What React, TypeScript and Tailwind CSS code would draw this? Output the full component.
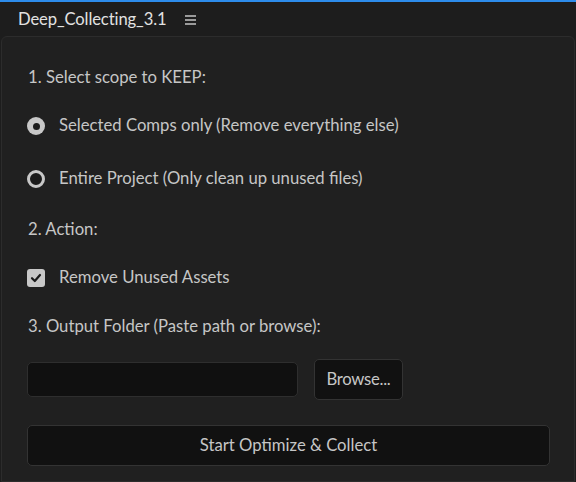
import React from "react";

export default function App() {
  const font = { fontFamily: "Lato, 'Open Sans', sans-serif" };
  return (
    <div className="w-[576px] h-[482px] bg-[#1d1d1d] overflow-hidden flex flex-col" style={font}>
      <div className="h-[2px] bg-[#2d8ceb]" />
      <div className="h-[34px] flex items-center pl-[18px] gap-[18px]">
        <span className="text-[16.6px] text-[#e2e2e2] tracking-[-0.1px]">Deep_Collecting_3.1</span>
        <div className="flex flex-col gap-[2px] mt-[1px]">
          <div className="w-[11px] h-[2px] bg-[#9a9a9a]" />
          <div className="w-[11px] h-[2px] bg-[#9a9a9a]" />
          <div className="w-[11px] h-[2px] bg-[#9a9a9a]" />
        </div>
      </div>
      <div className="flex-1 ml-[1px] mr-[1px] border border-[#2c2c2c] rounded-t-[6px] bg-[#202020] pl-[25px] pr-[26px] pt-[28px] text-[#c6c6c6] text-[16.7px]">
        <div className="h-[26px] flex items-center pl-[1px]">1. Select scope to KEEP:</div>
        <div className="h-[24px] mt-[23px] flex items-center gap-[14px]">
          <div className="w-[18px] h-[18px] rounded-full bg-[#c8c8c8] flex items-center justify-center">
            <div className="w-[7px] h-[7px] rounded-full bg-[#1b1b1b]" />
          </div>
          <span>Selected Comps only (Remove everything else)</span>
        </div>
        <div className="h-[24px] mt-[29px] flex items-center gap-[14px]">
          <div className="w-[18px] h-[18px] rounded-full border-[3px] border-[#c8c8c8] bg-[#1b1b1b]" />
          <span>Entire Project (Only clean up unused files)</span>
        </div>
        <div className="h-[26px] mt-[26px] flex items-center pl-[1px]">2. Action:</div>
        <div className="h-[24px] mt-[23px] flex items-center gap-[14px]">
          <div className="w-[18px] h-[18px] rounded-[3px] bg-[#c8c8c8] flex items-center justify-center">
            <svg width="12" height="12" viewBox="0 0 12 12">
              <path d="M2 6.2 L4.8 9 L10 3" fill="none" stroke="#1b1b1b" strokeWidth="2.2" strokeLinecap="round" strokeLinejoin="round" />
            </svg>
          </div>
          <span>Remove Unused Assets</span>
        </div>
        <div className="h-[26px] mt-[24px] flex items-center pl-[1px]">3. Output Folder (Paste path or browse):</div>
        <div className="mt-[19px] flex items-center gap-[16px]">
          <div className="w-[271px] h-[35px] rounded-[5px] bg-[#101010] border border-[#2e2e2e]" />
          <div className="w-[89px] h-[41px] rounded-[5px] bg-[#111111] border border-[#333333] flex items-center justify-center text-[#c6c6c6] tracking-[-0.3px]">
            Browse...
          </div>
        </div>
        <div className="mt-[25px] w-[523px] h-[41px] rounded-[5px] bg-[#111111] border border-[#333333] flex items-center justify-center text-[#c6c6c6]">
          Start Optimize &amp; Collect
        </div>
      </div>
    </div>
  );
}
